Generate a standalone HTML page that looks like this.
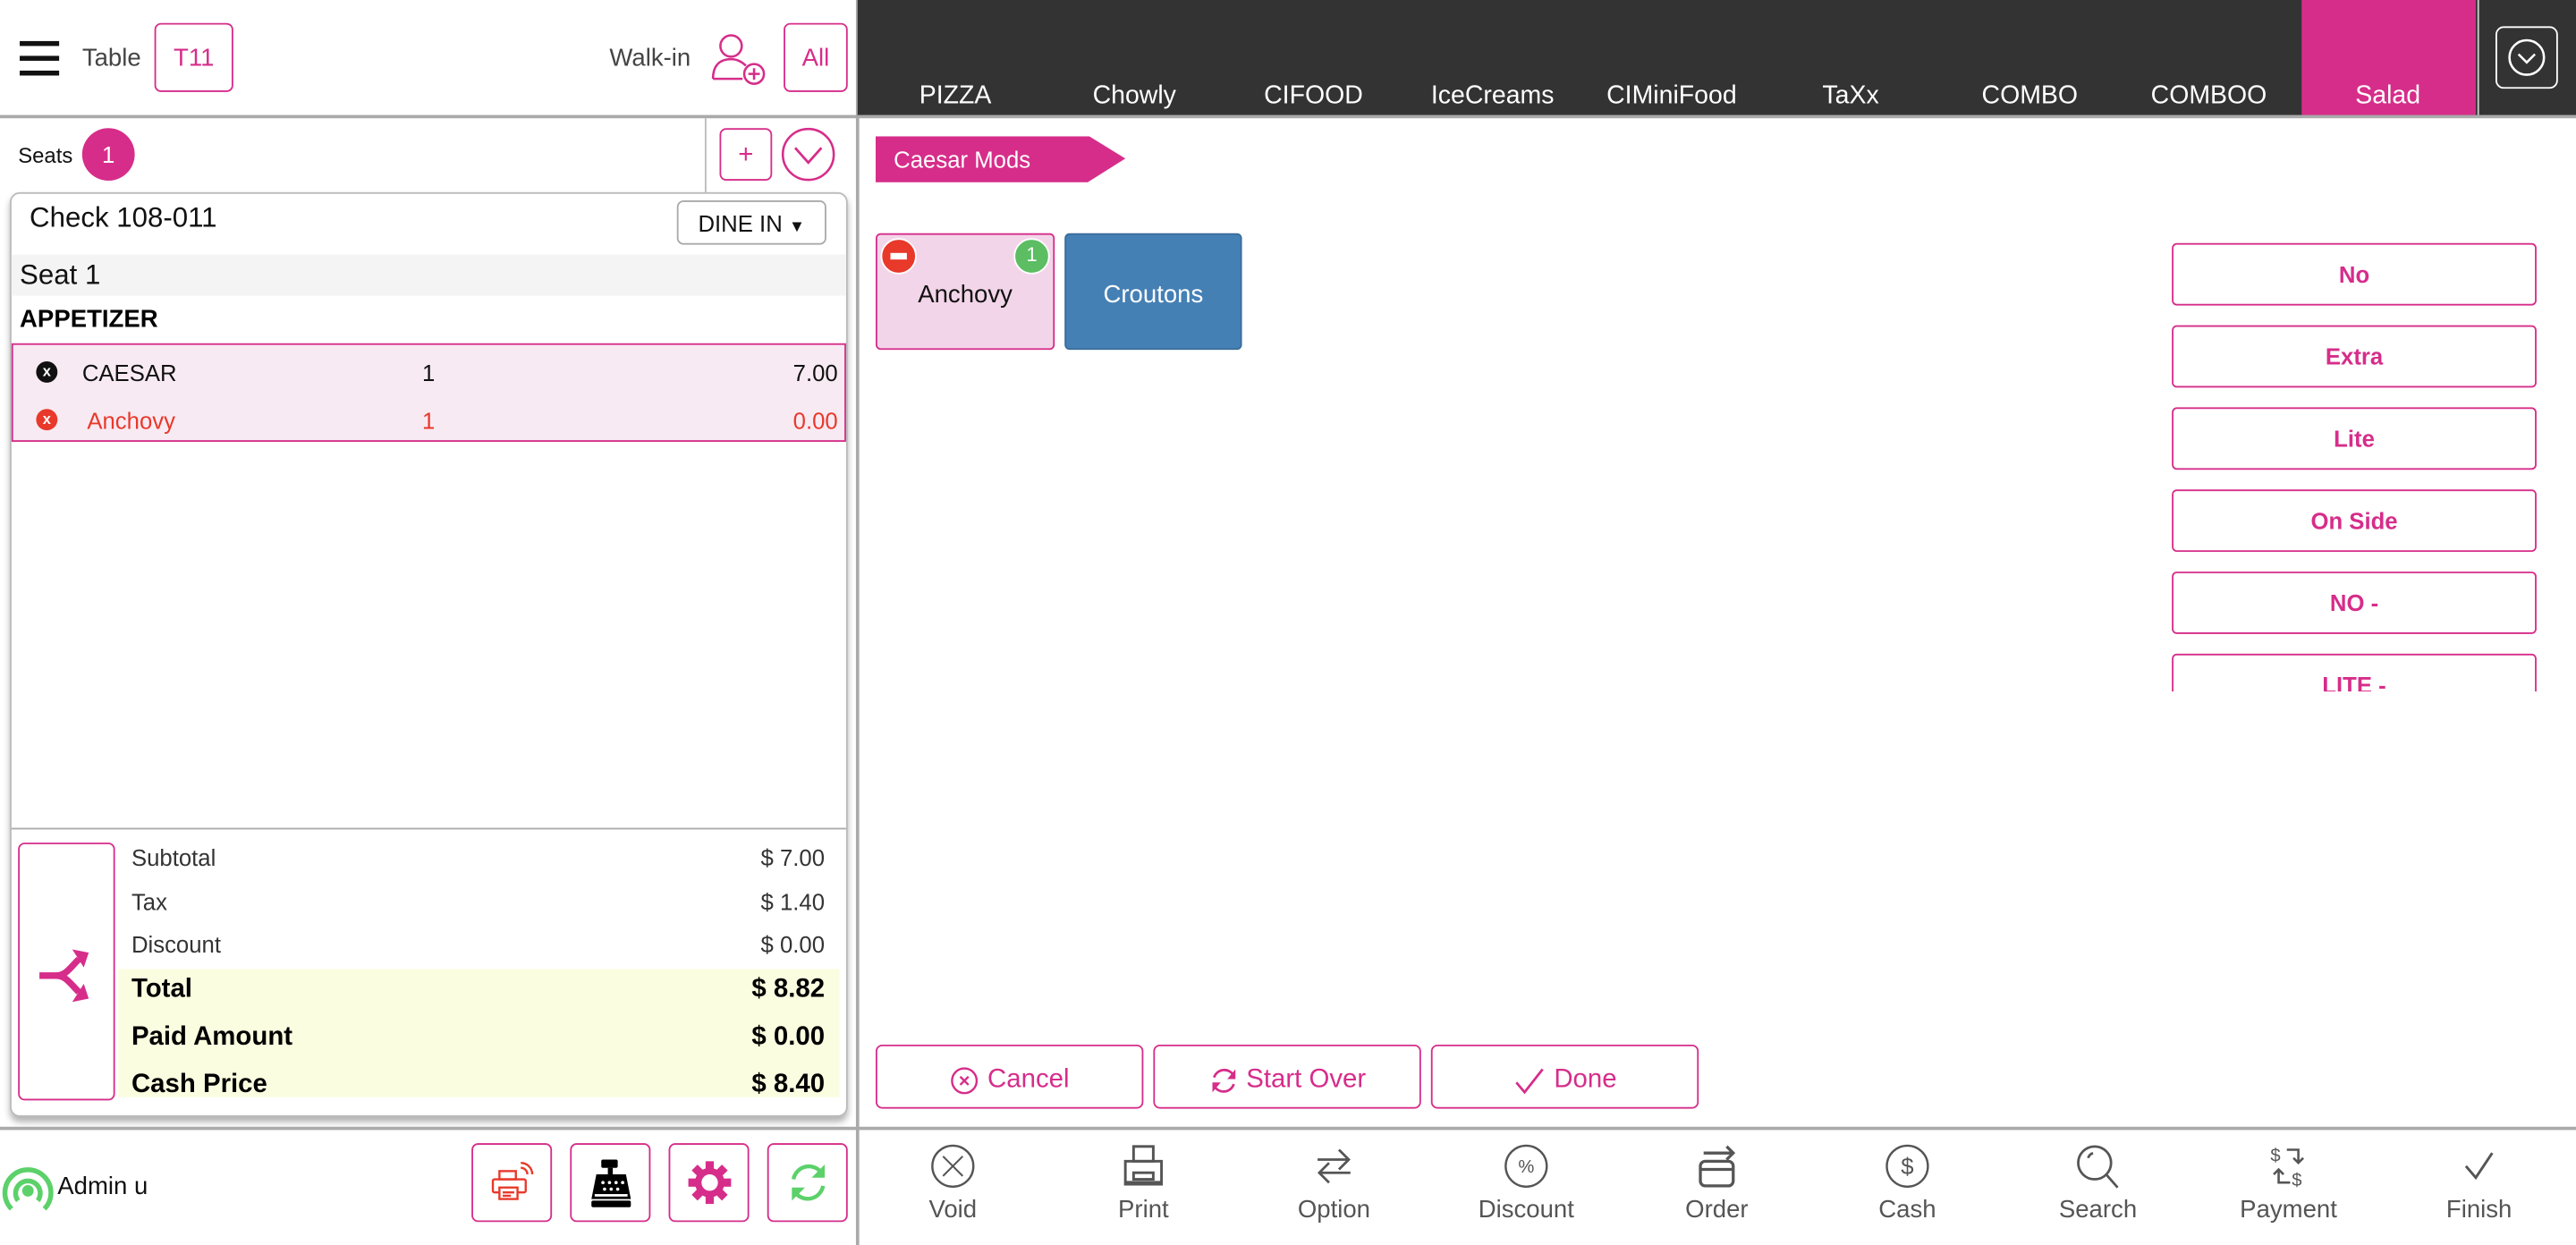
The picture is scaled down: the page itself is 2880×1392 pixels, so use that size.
<!DOCTYPE html>
<html><head><meta charset="utf-8"><style>
*{box-sizing:border-box;margin:0;padding:0}
html,body{width:2880px;height:1392px;overflow:hidden;background:#fff}
#w{position:absolute;left:0;top:0;width:1568px;height:758px;transform:scale(1.836735,1.836412);transform-origin:0 0;font-family:"Liberation Sans",Arial,sans-serif;color:#222}
.a{position:absolute}
.pk{color:#d62d8a}
.pb{border:1.5px solid #d62d8a;border-radius:4px}
.t{white-space:nowrap}
.tab{position:absolute;top:50px;width:109px;text-align:center;color:#fff;font-size:15.5px}
.opt{position:absolute;left:1322px;width:222px;height:38px;border:1.5px solid #d62d8a;border-radius:3px;color:#d62d8a;font-size:14px;font-weight:bold;text-align:center;line-height:37px;background:#fff}
.bb{position:absolute;top:636px;height:39px;width:163px;border:1.5px solid #d62d8a;border-radius:4px;color:#d62d8a;font-size:16px;display:flex;align-items:center;justify-content:center;gap:5px;padding-top:4px}
.ic{position:absolute;top:696px;width:80px;text-align:center;color:#555;font-size:15px}
.ic svg{display:block;margin:0 auto 4px}
.sm{position:absolute;left:80px;font-size:14px;color:#333}
.lb{position:absolute;left:80px;font-size:16px;font-weight:bold;color:#000}
.tb{position:absolute;top:696px;width:49px;height:48px;border:1.5px solid #d62d8a;border-radius:4px;display:flex;align-items:center;justify-content:center}
</style></head><body><div id="w">

<div class="a" style="left:12px;top:25px;width:24px;height:3px;background:#111"></div>
<div class="a" style="left:12px;top:34px;width:24px;height:3px;background:#111"></div>
<div class="a" style="left:12px;top:43px;width:24px;height:3px;background:#111"></div>
<div class="a t" style="left:50px;top:27px;font-size:15px;color:#444">Table</div>
<div class="a pb pk" style="left:94px;top:14px;width:48px;height:42px;text-align:center;line-height:42px;font-size:15px">T11</div>
<div class="a t" style="left:371px;top:27px;font-size:15px;color:#444">Walk-in</div>
<svg class="a" style="left:433px;top:18px" width="36" height="36" viewBox="0 0 36 36"><g fill="none" stroke="#d62d8a" stroke-width="1.4"><circle cx="12" cy="10" r="6.5"/><path d="M1 30 C1 22 5 18 12 18 C16 18 19 20 21 22"/><path d="M1 30 H19"/><circle cx="26" cy="27" r="6"/><path d="M26 23.5V30.5M22.5 27H29.5"/></g></svg>
<div class="a pb pk" style="left:477px;top:14px;width:39px;height:42px;text-align:center;line-height:42px;font-size:15px">All</div>
<div class="a" style="left:0;top:70px;width:522px;height:2px;background:#aaa"></div>

<div class="a t" style="left:11px;top:87px;font-size:13px;color:#111">Seats</div>
<div class="a" style="left:50px;top:78px;width:32px;height:32px;border-radius:50%;background:#d62d8a;color:#fff;text-align:center;line-height:32px;font-size:14px">1</div>
<div class="a" style="left:429px;top:72px;width:1px;height:45px;background:#bbb"></div>
<div class="a pb pk" style="left:438px;top:78px;width:32px;height:32px;text-align:center;line-height:31px;font-size:16px">+</div>
<svg class="a" style="left:475px;top:77px" width="34" height="34" viewBox="0 0 34 34"><circle cx="17" cy="17" r="15.5" fill="none" stroke="#d62d8a" stroke-width="1.4"/><path d="M9 13 L17 22 L25 13" fill="none" stroke="#d62d8a" stroke-width="1.5"/></svg>

<div class="a" style="left:6px;top:117px;width:510px;height:563px;border:1px solid #bbb;border-radius:6px;box-shadow:0 3px 4px rgba(0,0,0,.3);background:#fff"></div>
<div class="a t" style="left:18px;top:123px;font-size:17px;color:#111">Check 108-011</div>
<div class="a" style="left:412px;top:122px;width:91px;height:27px;border:1px solid #aaa;border-radius:4px;font-size:14px;line-height:27px;text-align:center;color:#111">DINE IN <span style="font-size:10px">▼</span></div>
<div class="a" style="left:7px;top:155px;width:508px;height:25px;background:#f4f4f4"></div>
<div class="a t" style="left:12px;top:158px;font-size:17px;color:#111">Seat 1</div>
<div class="a t" style="left:12px;top:186px;font-size:15px;font-weight:bold;color:#000">APPETIZER</div>
<div class="a" style="left:7px;top:209px;width:508px;height:60px;border:1.5px solid #d62d8a;background:#f8eaf3"></div>
<div class="a" style="left:22px;top:220px;width:13px;height:13px;border-radius:50%;background:#111;color:#fff;font-size:9px;font-weight:bold;text-align:center;line-height:13px">x</div>
<div class="a t" style="left:50px;top:219px;font-size:14px;color:#111">CAESAR</div>
<div class="a t" style="left:257px;top:219px;font-size:14px;color:#111">1</div>
<div class="a t" style="right:1058px;top:219px;font-size:14px;color:#111">7.00</div>
<div class="a" style="left:22px;top:249px;width:13px;height:13px;border-radius:50%;background:#e8392b;color:#fff;font-size:9px;font-weight:bold;text-align:center;line-height:13px">x</div>
<div class="a t" style="left:53px;top:248px;font-size:14px;color:#e8392b">Anchovy</div>
<div class="a t" style="left:257px;top:248px;font-size:14px;color:#e8392b">1</div>
<div class="a t" style="right:1058px;top:248px;font-size:14px;color:#e8392b">0.00</div>

<div class="a" style="left:7px;top:504px;width:508px;height:1px;background:#aaa"></div>
<div class="a pb" style="left:11px;top:513px;width:59px;height:157px"></div>
<svg class="a" style="left:22px;top:576px" width="38" height="36" viewBox="0 0 38 36"><g fill="none" stroke="#d62d8a" stroke-width="4"><path d="M2 18 H12 C18 18 20 14 26 8"/><path d="M12 18 C18 18 20 22 26 28"/></g><path d="M22 2 L32 4 L29 13 Z M22 34 L32 32 L29 23 Z" fill="#d62d8a"/></svg>
<div class="sm" style="top:514px">Subtotal</div><div class="a t" style="left:300px;top:514px;width:202px;text-align:right;font-size:14px;color:#333">$ 7.00</div>
<div class="sm" style="top:541px">Tax</div><div class="a t" style="left:300px;top:541px;width:202px;text-align:right;font-size:14px;color:#333">$ 1.40</div>
<div class="sm" style="top:567px">Discount</div><div class="a t" style="left:300px;top:567px;width:202px;text-align:right;font-size:14px;color:#333">$ 0.00</div>
<div class="a" style="left:72px;top:590px;width:439px;height:78px;background:#fbfde0"></div>
<div class="lb" style="top:594px">Total</div><div class="a t" style="left:300px;top:594px;width:202px;text-align:right;font-size:16px;font-weight:bold;color:#000">$ 8.82</div>
<div class="lb" style="top:623px">Paid Amount</div><div class="a t" style="left:300px;top:623px;width:202px;text-align:right;font-size:16px;font-weight:bold;color:#000">$ 0.00</div>
<div class="lb" style="top:652px">Cash Price</div><div class="a t" style="left:300px;top:652px;width:202px;text-align:right;font-size:16px;font-weight:bold;color:#000">$ 8.40</div>

<div class="a" style="left:0;top:686px;width:1568px;height:1.5px;background:#aaa"></div>
<svg class="a" style="left:0;top:706px" width="34" height="34" viewBox="0 0 34 34"><g fill="none" stroke="#5cd16a" stroke-width="3"><path d="M7 30 A14 14 0 1 1 27 30"/><path d="M11 25 A7.5 7.5 0 1 1 23 25"/></g><circle cx="17" cy="19" r="3.5" fill="#5cd16a"/></svg>
<div class="a t" style="left:35px;top:714px;font-size:15px;color:#111">Admin u</div>
<div class="tb" style="left:287px"><svg width="30" height="30" viewBox="0 0 30 30"><g fill="none" stroke="#e8392b" stroke-width="1.3"><rect x="7" y="8" width="10" height="5"/><rect x="3" y="13" width="20" height="8" rx="1"/><rect x="7" y="18" width="11" height="7" fill="#fff"/><path d="M9 21h7M9 23h5"/><path d="M20 6a4 4 0 0 1 4 4M20 3a7 7 0 0 1 7 7"/></g></svg></div>
<div class="tb" style="left:347px"><svg width="30" height="32" viewBox="0 0 30 32"><g fill="#000"><rect x="9" y="2" width="10" height="5" rx="1"/><rect x="13" y="7" width="3" height="4"/><path d="M6 11 H24 L27 26 H3 Z"/><rect x="3" y="27" width="24" height="4" rx="1"/></g><g fill="#fff"><circle cx="10" cy="16" r="1"/><circle cx="14" cy="16" r="1"/><circle cx="18" cy="16" r="1"/><circle cx="22" cy="16" r="1"/><circle cx="11" cy="20" r="1"/><circle cx="15" cy="20" r="1"/><circle cx="19" cy="20" r="1"/><rect x="5" y="23" width="20" height="1.5"/></g></svg></div>
<div class="tb" style="left:407px"><svg width="28" height="28" viewBox="0 0 28 28"><g fill="#d62d8a"><circle cx="14" cy="14" r="9"/><g id="tt"><rect x="11.5" y="1" width="5" height="6"/><rect x="11.5" y="21" width="5" height="6"/></g><use href="#tt" transform="rotate(45 14 14)"/><use href="#tt" transform="rotate(90 14 14)"/><use href="#tt" transform="rotate(135 14 14)"/></g><circle cx="14" cy="14" r="5" fill="#fff"/></svg></div>
<div class="tb" style="left:467px"><svg width="28" height="28" viewBox="0 0 28 28"><g fill="none" stroke="#5cd16a" stroke-width="2.4"><path d="M5 12 A9.5 9.5 0 0 1 22 8"/><path d="M23 16 A9.5 9.5 0 0 1 6 20"/></g><path d="M24 3 V11 H16 Z" fill="#5cd16a"/><path d="M4 25 V17 H12 Z" fill="#5cd16a"/></svg></div>

<div class="a" style="left:521px;top:0;width:1.5px;height:758px;background:#aaa"></div>

<div class="a" style="left:522px;top:0;width:1046px;height:71px;background:#333"></div>
<div class="a" style="left:522px;top:70px;width:1046px;height:2px;background:#aaa"></div>
<div class="a" style="left:1401px;top:0;width:106px;height:70px;background:#d62d8a"></div>
<div class="a" style="left:1508px;top:0;width:1px;height:70px;background:#ccc"></div>
<div class="tab" style="left:527px">PIZZA</div>
<div class="tab" style="left:636px">Chowly</div>
<div class="tab" style="left:745px">CIFOOD</div>
<div class="tab" style="left:854px">IceCreams</div>
<div class="tab" style="left:963px">CIMiniFood</div>
<div class="tab" style="left:1072px">TaXx</div>
<div class="tab" style="left:1181px">COMBO</div>
<div class="tab" style="left:1290px">COMBOO</div>
<div class="tab" style="left:1399px">Salad</div>
<div class="a" style="left:1519px;top:16px;width:38px;height:38px;border:1.5px solid #fff;border-radius:5px"></div>
<svg class="a" style="left:1526px;top:23px" width="24" height="24" viewBox="0 0 24 24"><circle cx="12" cy="12" r="10.5" fill="none" stroke="#fff" stroke-width="1.4"/><path d="M7 10 L12 15 L17 10" fill="none" stroke="#fff" stroke-width="1.4"/></svg>

<svg class="a" style="left:533px;top:83px" width="153" height="28" viewBox="0 0 153 28"><path d="M0 0 H130 L152 13.5 L129 28 H0 Z" fill="#d62d8a"/></svg>
<div class="a t" style="left:544px;top:89px;font-size:14px;color:#fff">Caesar Mods</div>

<div class="a" style="left:533px;top:142px;width:109px;height:71px;background:#f3d5e9;border:1.5px solid #d62d8a;border-radius:3px"></div>
<div class="a" style="left:536px;top:145px;width:22px;height:22px;border-radius:50%;background:#e8392b;border:1.5px solid #fff"></div>
<div class="a" style="left:542px;top:154px;width:10px;height:4px;background:#fff"></div>
<div class="a" style="left:617px;top:145px;width:22px;height:22px;border-radius:50%;background:#5cbd63;border:1.5px solid #fff;color:#fff;font-size:12px;text-align:center;line-height:19px">1</div>
<div class="a" style="left:533px;top:171px;width:109px;text-align:center;font-size:15px;color:#111">Anchovy</div>
<div class="a" style="left:648px;top:142px;width:108px;height:71px;background:#4580b5;border:1px solid #3a6d9c;border-radius:3px;color:#fff;text-align:center;line-height:73px;font-size:15px">Croutons</div>

<div style="position:absolute;left:0;top:0;width:1568px;height:421px;overflow:hidden">
<div class="opt" style="top:148px">No</div>
<div class="opt" style="top:198px">Extra</div>
<div class="opt" style="top:248px">Lite</div>
<div class="opt" style="top:298px">On Side</div>
<div class="opt" style="top:348px">NO -</div>
<div class="opt" style="top:398px">LITE -</div>
</div>

<div class="bb" style="left:533px"><svg width="18" height="18" viewBox="0 0 18 18"><circle cx="9" cy="9" r="7.5" fill="none" stroke="#d62d8a" stroke-width="1.3"/><path d="M6.5 6.5L11.5 11.5M11.5 6.5L6.5 11.5" stroke="#d62d8a" stroke-width="1.3"/></svg>Cancel</div>
<div class="bb" style="left:702px"><svg width="18" height="18" viewBox="0 0 18 18"><g fill="none" stroke="#d62d8a" stroke-width="1.5"><path d="M3 7 A6.5 6.5 0 0 1 15 6"/><path d="M15 11 A6.5 6.5 0 0 1 3 12"/></g><path d="M16 2V8H11Z M2 16V10H7Z" fill="#d62d8a"/></svg>Start Over</div>
<div class="bb" style="left:871px"><svg width="20" height="18" viewBox="0 0 20 18"><path d="M2 10 L7 16 L18 2" fill="none" stroke="#d62d8a" stroke-width="1.5"/></svg>Done</div>

<div class="ic" style="left:540px"><svg width="28" height="28" viewBox="0 0 28 28"><circle cx="14" cy="14" r="12.5" fill="none" stroke="#555" stroke-width="1.3"/><path d="M8 8L20 20M20 8L8 20" stroke="#555" stroke-width="1.1"/></svg>Void</div>
<div class="ic" style="left:656px"><svg width="28" height="28" viewBox="0 0 28 28"><g fill="none" stroke="#555" stroke-width="1.6"><rect x="8" y="2" width="12" height="9"/><rect x="3" y="11" width="22" height="14"/><rect x="8" y="18" width="12" height="4"/></g><rect x="3" y="23" width="22" height="2" fill="#555"/></svg>Print</div>
<div class="ic" style="left:772px"><svg width="28" height="28" viewBox="0 0 28 28"><g fill="none" stroke="#555" stroke-width="1.5"><path d="M4 10 H22 M17 4 L23 10 L17 16"/><path d="M24 18 H6 M11 12 L5 18 L11 24"/></g></svg>Option</div>
<div class="ic" style="left:889px"><svg width="28" height="28" viewBox="0 0 28 28"><circle cx="14" cy="14" r="12.5" fill="none" stroke="#555" stroke-width="1.3"/><text x="14" y="18" text-anchor="middle" font-size="11" fill="#555" font-family="Liberation Sans">%</text></svg>Discount</div>
<div class="ic" style="left:1005px"><svg width="28" height="28" viewBox="0 0 28 28"><g fill="none" stroke="#555" stroke-width="1.8"><rect x="4" y="11" width="20" height="15" rx="3"/><path d="M4 16H24M6 6H24M20 2L24 6L20 10"/></g></svg>Order</div>
<div class="ic" style="left:1121px"><svg width="28" height="28" viewBox="0 0 28 28"><circle cx="14" cy="14" r="12.5" fill="none" stroke="#555" stroke-width="1.3"/><text x="14" y="19" text-anchor="middle" font-size="14" fill="#555" font-family="Liberation Sans">$</text></svg>Cash</div>
<div class="ic" style="left:1237px"><svg width="28" height="28" viewBox="0 0 28 28"><g fill="none" stroke="#555" stroke-width="1.5"><circle cx="12" cy="12" r="10"/><path d="M19 19L26 27"/><path d="M8 9A5 5 0 0 1 11 6"/></g></svg>Search</div>
<div class="ic" style="left:1353px"><svg width="28" height="28" viewBox="0 0 28 28"><text x="3" y="11" font-size="11" fill="#555" font-family="Liberation Sans">$</text><text x="16" y="26" font-size="11" fill="#555" font-family="Liberation Sans">$</text><g fill="none" stroke="#555" stroke-width="1.4"><path d="M13 4H20V12M17 9L20 12L23 9"/><path d="M15 24H8V16M5 19L8 16L11 19"/></g></svg>Payment</div>
<div class="ic" style="left:1469px"><svg width="28" height="28" viewBox="0 0 28 28"><path d="M6 14L12 21L22 6" fill="none" stroke="#555" stroke-width="1.6"/></svg>Finish</div>

</div></body></html>
